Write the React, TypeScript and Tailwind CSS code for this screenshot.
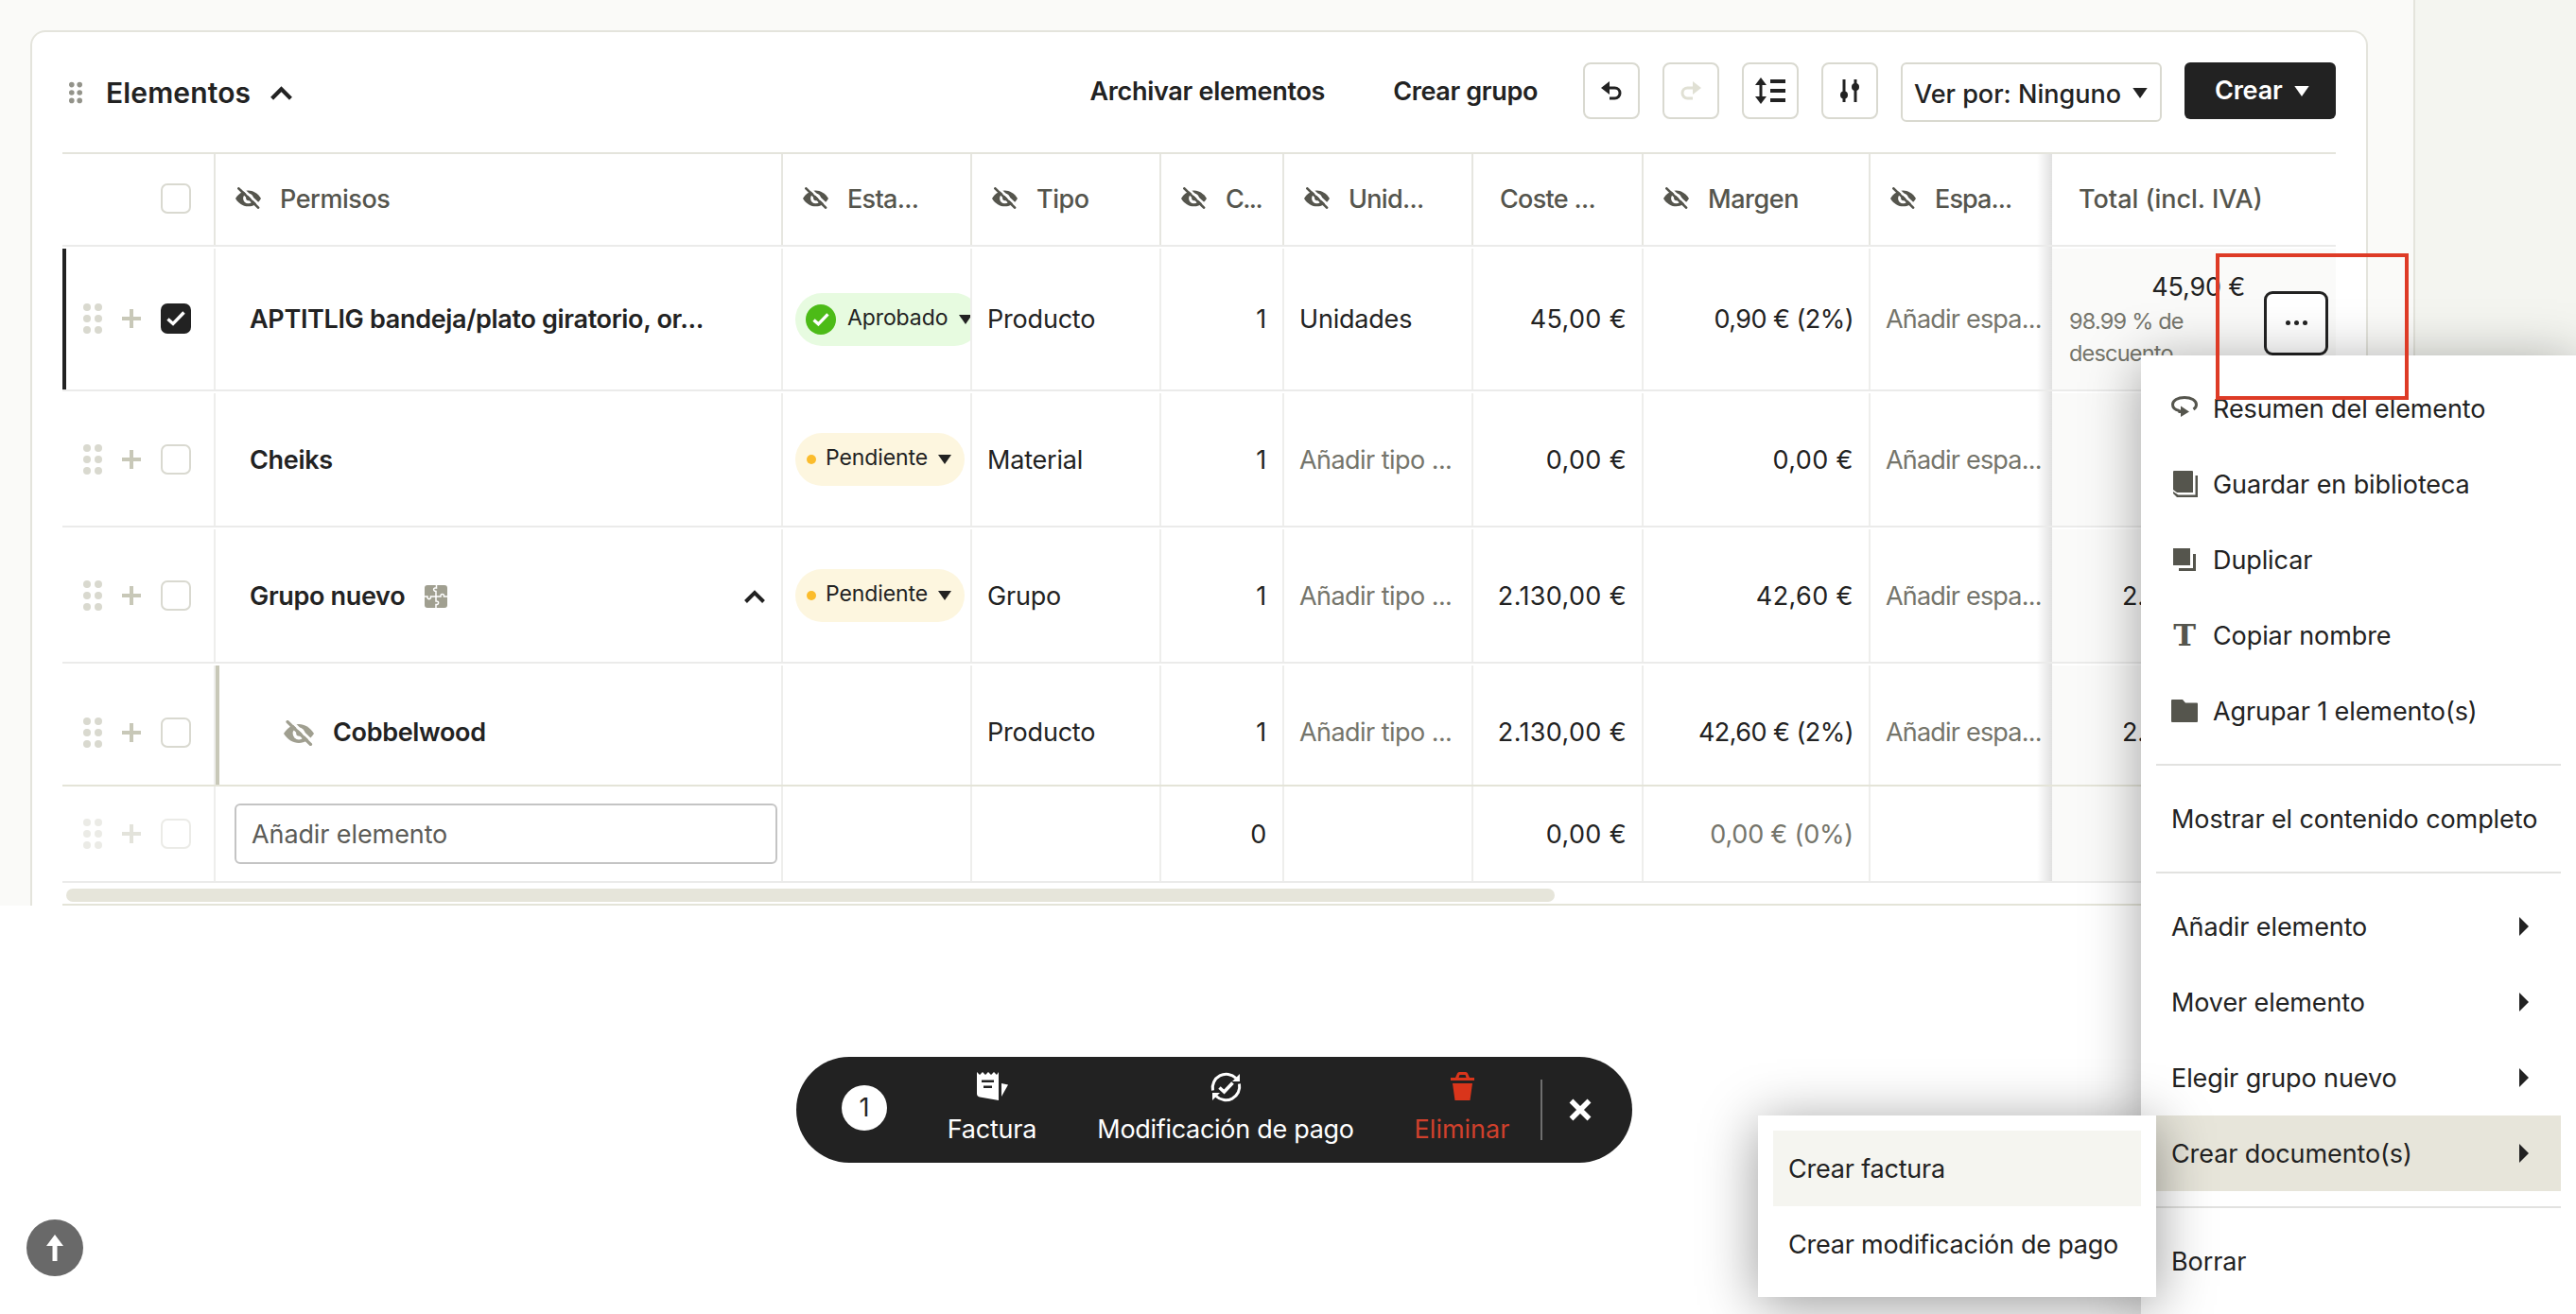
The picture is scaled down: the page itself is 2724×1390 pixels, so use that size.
import React from 'react';
import clsx from 'clsx';

type Row = {
  id: string;
  name: string;
  status?: 'approved' | 'pending';
  type: string;
  qty: string;
  unit: string;
  cost: string;
  margin: string;
  total: string;
  height: string;
  selected?: boolean;
  group?: boolean;
  child?: boolean;
};

const rows: Row[] = [
  { id: 'r1', name: 'APTITLIG bandeja/plato giratorio, or...', status: 'approved', type: 'Producto', qty: '1', unit: 'Unidades', cost: '45,00 €', margin: '0,90 € (2%)', total: '45,90 €', height: 'h-[153px]', selected: true },
  { id: 'r2', name: 'Cheiks', status: 'pending', type: 'Material', qty: '1', unit: '', cost: '0,00 €', margin: '0,00 €', total: '', height: 'h-[144px]' },
  { id: 'r3', name: 'Grupo nuevo', status: 'pending', type: 'Grupo', qty: '1', unit: '', cost: '2.130,00 €', margin: '42,60 €', total: '2.', height: 'h-[144px]', group: true },
  { id: 'r4', name: 'Cobbelwood', type: 'Producto', qty: '1', unit: '', cost: '2.130,00 €', margin: '42,60 € (2%)', total: '2.', height: 'h-[130px]', child: true },
];

const headers = [
  { label: 'Permisos', width: 'w-[600px]', hidden: true },
  { label: 'Esta...', width: 'w-[200px]', hidden: true },
  { label: 'Tipo', width: 'w-[200px]', hidden: true },
  { label: 'C...', width: 'w-[130px]', hidden: true },
  { label: 'Unid...', width: 'w-[200px]', hidden: true },
  { label: 'Coste ...', width: 'w-[180px]', hidden: false },
  { label: 'Margen', width: 'w-[240px]', hidden: true },
];

/* ---------- icons ---------- */

const EyeOff = ({ className }: { className: string }) => (
  <svg viewBox="0 0 32 27" className={className}>
    <path d="M0 14C4 7.500 10 4 16 4s12 3.500 16 10c-4 6.500-10 10-16 10S4 20.500 0 14z" fill="currentColor" />
    <circle cx="16" cy="14" r="6.400" fill="#fff" />
    <circle cx="16.500" cy="13.500" r="3.300" fill="currentColor" />
    <path d="M6 -1L32 24" stroke="#fff" strokeWidth="3" />
    <path d="M4 1.500L28.500 25.500" stroke="currentColor" strokeWidth="3.200" strokeLinecap="round" />
  </svg>
);

const Grip = ({ className }: { className: string }) => (
  <svg viewBox="0 0 20 32" className={className} fill="currentColor">
    {[4, 16, 28].map((y) => (
      <g key={y}>
        <circle cx="4" cy={y} r="4" />
        <circle cx="16" cy={y} r="4" />
      </g>
    ))}
  </svg>
);

const Plus = () => (
  <svg viewBox="0 0 20 20" className="w-5 h-5 text-[#c8c8b8]">
    <path d="M10 0v20M0 10h20" stroke="currentColor" strokeWidth="4" />
  </svg>
);

const Caret = ({ className }: { className: string }) => (
  <svg viewBox="0 0 14 10" className={className} fill="currentColor">
    <path d="M0 0h14L7 10z" />
  </svg>
);

const ChevronUp = ({ className }: { className: string }) => (
  <svg viewBox="0 0 22 14" className={className} fill="none" stroke="currentColor" strokeWidth="4">
    <path d="M1.500 12.500L11 3l9.500 9.500" />
  </svg>
);

const Puzzle = () => (
  <svg viewBox="0 0 24 24" className="w-6 h-6 ml-[21px]">
    <rect width="24" height="24" rx="3" fill="#a09f90" />
    <path
      d="M12.500 0v3c-3.500-.8-4 3.500-.5 3.500V17c3.500-.5 3.500 4 0 3.500V24M0 12h3c-.5 3.500 4 3.500 3.500 0H17c-.5-3.500 4-3.500 3.500 0H24"
      fill="none"
      stroke="#fff"
      strokeWidth="1.500"
    />
  </svg>
);

const Undo = ({ className }: { className: string }) => (
  <svg viewBox="0 0 22 20" className={className}>
    <path d="M0 7L9 0v14z" fill="currentColor" />
    <path d="M7 7h7.500a5.500 5.500 0 0 1 0 11H9" fill="none" stroke="currentColor" strokeWidth="3" />
  </svg>
);

const LineHeight = () => (
  <svg viewBox="0 0 32 28" className="w-8 h-7" fill="currentColor">
    <path d="M6 0l6 8H7.500v12H12l-6 8-6-8h4.500V8H0z" />
    <path d="M16 2h16v4H16zM16 12h16v4H16zM16 22h16v4H16z" />
  </svg>
);

const Sliders = () => (
  <svg viewBox="0 0 20 24" className="w-5 h-6" fill="currentColor">
    <path d="M2.500 0h3v24h-3zM14.500 0h3v24h-3z" />
    <circle cx="4" cy="16.500" r="4" />
    <circle cx="16" cy="8" r="4" />
  </svg>
);

const menuIcons: Record<string, React.ReactNode> = {
  summary: (
    <svg viewBox="0 0 28 24" className="w-7 h-6 -mt-1" fill="none">
      <path d="M8.500 16.500C4 15.500 1.500 13 1.500 10 1.500 5.500 7 2.500 14 2.500S26.500 5.500 26.500 10c0 2-1 3.700-3 5" stroke="currentColor" strokeWidth="3" />
      <path d="M10 11.500l9 6-9 5.500v-4H7.500v-3.500H10z" fill="currentColor" />
    </svg>
  ),
  library: (
    <svg viewBox="0 0 28 28" className="w-7 h-7" fill="currentColor">
      <path d="M3 0h19a1 1 0 0 1 1 1v22H6L2 20V1a1 1 0 0 1 1-1z" />
      <path d="M25.500 5H28v23H6l-4-4v-2l5.500 3.500h18z" />
    </svg>
  ),
  duplicate: (
    <svg viewBox="0 0 28 28" className="w-7 h-7" fill="currentColor">
      <path d="M2 2h18v18H2z" />
      <path d="M23 8h3v18H8v-3h15z" />
    </svg>
  ),
  title: (
    <span className="w-7 text-center text-[32px] leading-[28px] font-bold [font-family:'DejaVu_Serif',serif]">T</span>
  ),
  folder: (
    <svg viewBox="0 0 28 24" className="w-7 h-6" fill="currentColor">
      <path d="M1 0h11l3 3.500h12a1 1 0 0 1 1 1V23a1 1 0 0 1-1 1H1a1 1 0 0 1-1-1V1a1 1 0 0 1 1-1z" />
    </svg>
  ),
};

/* ---------- table parts ---------- */

const Checkbox = ({ checked }: { checked?: boolean }) => (
  <div
    className={clsx(
      'w-8 h-8 rounded-[7px] flex items-center justify-center shrink-0',
      checked ? 'bg-[#222]' : 'bg-white border-2 border-[#d9d9d0]',
    )}
  >
    {checked && (
      <svg viewBox="0 0 20 16" className="w-5 h-4" fill="none" stroke="#fff" strokeWidth="3.400">
        <path d="M1.500 8.500l5.500 5L18.500 1.500" />
      </svg>
    )}
  </div>
);

const StatusPill = ({ status }: { status: 'approved' | 'pending' }) =>
  status === 'approved' ? (
    <div className="flex items-center h-14 w-[196px] shrink-0 rounded-full bg-[#e7fbe0] pl-[11px]">
      <div className="w-8 h-8 rounded-full bg-[#4cbb17] flex items-center justify-center">
        <svg viewBox="0 0 20 16" className="w-[18px] h-[14px]" fill="none" stroke="#fff" strokeWidth="3.800">
          <path d="M1.500 8.500l5.500 5L18.500 1.500" />
        </svg>
      </div>
      <span className="text-[23px] ml-[12px] w-[118px] pb-[3px] whitespace-nowrap tracking-[-0.1px]">Aprobado</span>
      <Caret className="w-[14px] h-[10px]" />
    </div>
  ) : (
    <div className="flex items-center h-14 w-[179px] shrink-0 rounded-full bg-[#fdf6df] pl-[12px]">
      <div className="w-[10px] h-[10px] rounded-full bg-[#fbbc2c]" />
      <span className="text-[23px] ml-[10px] w-[119px] pb-[3px] whitespace-nowrap tracking-[-0.1px]">Pendiente</span>
      <Caret className="w-[14px] h-[10px]" />
    </div>
  );

const Cell = ({ className, children }: { className: string; children?: React.ReactNode }) => (
  <div className={clsx('flex items-center shrink-0 mt-[2px] border-r-2 border-[#eeeeec] overflow-hidden whitespace-nowrap', className)}>
    {children}
  </div>
);

const RowTools = ({ checked }: { checked?: boolean }) => (
  <>
    <Grip className="w-5 h-8 text-[#d9d9cf]" />
    <span className="ml-[21px] mr-[21px]"><Plus /></span>
    <Checkbox checked={checked} />
  </>
);

const StickyShadow = () => (
  <div className="w-4 -ml-4 shrink-0 bg-linear-to-r from-black/0 to-black/12" />
);

const TableRow = ({ row }: { row: Row }) => {
  // child rows hang slightly lower than their own centre
  const pad = row.child ? 'pt-[17px]' : 'pt-[2px]';

  return (
    <div className={clsx('flex border-b-2', row.height, row.child ? 'border-[#e4e4d8]' : 'border-[#ebebea]')}>
      <Cell
        className={clsx(
          'w-[162px] border-l-4 pl-[18px]',
          row.selected ? 'border-l-[#222] pb-[2px]' : 'border-l-transparent',
          row.child && 'pt-[15px]',
        )}
      >
        <RowTools checked={row.selected} />
      </Cell>
      <Cell className={clsx('w-[600px]', pad, row.child ? 'border-l-4 border-l-[#c8c8b8] pl-[68px]' : 'pl-[36px]')}>
        {row.child && <EyeOff className="w-8 h-[27px] text-[#a09f90] mr-[20px]" />}
        <span className="font-semibold tracking-[-0.33px]">{row.name}</span>
        {row.group && (
          <>
            <Puzzle />
            <ChevronUp className="w-[22px] h-[14px] ml-auto mr-[17px]" />
          </>
        )}
      </Cell>
      <Cell className="w-[200px] pl-[13px]">{row.status && <StatusPill status={row.status} />}</Cell>
      <Cell className={clsx('w-[200px] pl-[16px]', pad)}>{row.type}</Cell>
      <Cell className={clsx('w-[130px] justify-end pr-[17px]', pad)}>{row.qty}</Cell>
      <Cell className={clsx('w-[200px] pl-[16px]', pad)}>
        {row.unit || <span className="text-[#75756b] tracking-[-0.55px]">Añadir tipo ...</span>}
      </Cell>
      <Cell className={clsx('w-[180px] justify-end pr-[16px] tracking-[0.35px]', pad)}>{row.cost}</Cell>
      <Cell
        className={clsx(
          'w-[240px] justify-end pr-[16px]',
          row.margin.includes('(') ? 'tracking-[-0.55px]' : 'tracking-[0.4px]',
          pad,
        )}
      >
        {row.margin}
      </Cell>
      <div className={clsx('flex items-center w-[192px] shrink-0 pl-[16px] mt-[2px] whitespace-nowrap text-[#75756b] tracking-[-0.8px]', pad)}>
        Añadir espa...
      </div>
      <StickyShadow />
      <div className="w-[300px] mt-[2px] bg-[#fafaf9] flex items-center shrink-0">
        {row.selected ? (
          <>
            <div className="w-[204px] h-full pt-[23px]">
              <div className="text-right leading-9">{row.total}</div>
              <div className="pl-[18px] pt-px w-[170px] text-[23.500px] leading-[34px] tracking-[-0.8px] text-[#75756b]">
                98.99 % de descuento
              </div>
            </div>
            <div className="ml-[20px] mt-[8px] w-[68px] h-[68px] rounded-[9px] border-[3px] border-[#222] bg-white flex items-center justify-center gap-[4px]">
              <i className="w-[5px] h-[5px] rounded-full bg-[#222]" />
              <i className="w-[5px] h-[5px] rounded-full bg-[#222]" />
              <i className="w-[5px] h-[5px] rounded-full bg-[#222]" />
            </div>
          </>
        ) : (
          <span className={clsx('pl-[74px]', pad)}>{row.total}</span>
        )}
      </div>
    </div>
  );
};

const ToolButton = ({ children }: { children: React.ReactNode }) => (
  <button className="w-[60px] h-[60px] rounded-[8px] border-2 border-[#d9d9d0] bg-white flex items-center justify-center">
    {children}
  </button>
);

/* ---------- context menu ---------- */

const MenuItem = ({ label, icon, arrow, active }: { label: string; icon?: string; arrow?: boolean; active?: boolean }) => (
  <div className={clsx('flex items-center h-20 pl-4 pr-[34px] whitespace-nowrap', active && 'bg-[#e7e5da]')}>
    {icon && <span className="w-7 mr-4 flex justify-center text-[#55554d]">{menuIcons[icon]}</span>}
    <span className="pt-[2px] tracking-[-0.1px]">{label}</span>
    {arrow && (
      <svg viewBox="0 0 10 20" className="w-[10px] h-5 ml-auto" fill="currentColor">
        <path d="M0 0l10 10L0 20z" />
      </svg>
    )}
  </div>
);

const Divider = () => <div className="h-[2px] bg-[#e2e2e0] my-4" />;

const ContextMenu = () => (
  <div className="absolute left-[2264px] top-[376px] w-[460px] p-4 bg-white shadow-[0_8px_56px_rgba(0,0,0,0.36)]">
    <MenuItem icon="summary" label="Resumen del elemento" />
    <MenuItem icon="library" label="Guardar en biblioteca" />
    <MenuItem icon="duplicate" label="Duplicar" />
    <MenuItem icon="title" label="Copiar nombre" />
    <MenuItem icon="folder" label="Agrupar 1 elemento(s)" />
    <Divider />
    <MenuItem label="Mostrar el contenido completo" />
    <Divider />
    <MenuItem label="Añadir elemento" arrow />
    <MenuItem label="Mover elemento" arrow />
    <MenuItem label="Elegir grupo nuevo" arrow />
    <MenuItem label="Crear documento(s)" arrow active />
    <Divider />
    <MenuItem label="Borrar" />
  </div>
);

const SubMenu = () => (
  <div className="absolute left-[1859px] top-[1180px] w-[421px] p-4 bg-white shadow-[0_8px_56px_rgba(0,0,0,0.4)]">
    <div className="h-20 flex items-center pl-4 pt-[2px] bg-[#f5f5f0]">Crear factura</div>
    <div className="h-20 flex items-center pl-4 pt-[2px] whitespace-nowrap tracking-[-0.23px]">Crear modificación de pago</div>
  </div>
);

/* ---------- floating selection bar ---------- */

const SelectionBar = () => (
  <div className="absolute left-[842px] top-[1118px] w-[884px] h-[112px] rounded-full bg-[#222] text-white flex items-center">
    <div className="ml-12 -mt-1 w-12 h-12 rounded-full bg-white text-[#222] flex items-center justify-center">1</div>
    <div className="ml-[51px] w-[120px] h-full pt-4 flex flex-col items-center">
      <svg viewBox="0 0 33 30" className="w-[33px] h-[30px]">
        <path d="M0 0l3 3 3-3 3 3 3-3 3 3 3-3 3 3 2-3v30L3 26.500C1 26 0 25 0 23z" fill="#fff" />
        <path d="M5 8.500h13v2.500H5zM7 14.500h9V17H7z" fill="#222" />
        <path d="M26 12l7 1.500L26 26z" fill="#fff" />
      </svg>
      <span className="mt-[13px] leading-9">Factura</span>
    </div>
    <div className="ml-[37px] w-[300px] h-full pt-4 flex flex-col items-center">
      <svg viewBox="0 0 33 32" className="w-[33px] h-8" fill="none" stroke="#fff" strokeWidth="3">
        <path d="M2.500 19.500A14.500 14.500 0 0 1 27 6.500M30.500 12.500A14.500 14.500 0 0 1 6 25.500" />
        <path d="M31 2v8h-8zM2 30v-8h8z" fill="#fff" stroke="none" />
        <path d="M9.500 16.500l5 4.500 9-9.500" strokeWidth="3.600" />
      </svg>
      <span className="mt-[11px] leading-9 tracking-[-0.3px]">Modificación de pago</span>
    </div>
    <div className="ml-[40px] w-[120px] h-full pt-4 flex flex-col items-center text-[#d9351b]">
      <svg viewBox="0 0 25 30" className="w-[25px] h-[30px]" fill="currentColor">
        <path d="M0 6h5l2-4.500A2.500 2.500 0 0 1 9 0h7a2.500 2.500 0 0 1 2 1.500L20 6h5v3H0zM8.500 6h8l-1-3h-6z" fillRule="evenodd" />
        <path d="M2 12h21l-2.500 18h-16z" />
      </svg>
      <span className="mt-[13px] leading-9 tracking-[0px] text-[#d0402c]">Eliminar</span>
    </div>
    <div className="ml-[23px] w-[2px] h-16 bg-[#6f6f6f]" />
    <svg viewBox="0 0 24 24" className="w-6 h-6 ml-[28px]" stroke="#fff" strokeWidth="5.500">
      <path d="M2.500 2.500l19 19M21.500 2.500l-19 19" />
    </svg>
  </div>
);

export default function App() {
  return (
    <div className="relative w-[2724px] h-[1390px] overflow-hidden bg-white text-[#222] text-[27px] tracking-[-0.2px] [font-family:Inter,'Liberation_Sans',sans-serif]">
      <div className="flex h-[958px] bg-[#f4f5f0]">
        <div className="w-[2554px] border-r-2 border-[#e4e4dc] bg-[#fafaf8] pt-8 pl-8">
          <div className="w-[2472px] h-[926px] bg-white border-2 border-b-0 border-[#e4e4dc] rounded-t-[16px] px-8">
            {/* Section header */}
            <div className="flex items-start h-[127px] pt-8">
              <div className="flex items-center h-16 pl-[7px]">
                <Grip className="w-[14px] h-6 text-[#93938a]" />
                <h2 className="ml-[25px] text-[30px] font-semibold tracking-[0.15px]">Elementos</h2>
                <ChevronUp className="ml-[21px] w-[23px] h-[15px]" />
              </div>
              <div className="flex items-start ml-auto gap-6">
                <button className="h-[62px] mr-[48px] pt-px font-semibold tracking-[-0.3px]">Archivar elementos</button>
                <button className="h-[62px] mr-[24px] pt-px font-semibold tracking-[-0.35px]">Crear grupo</button>
                <ToolButton><Undo className="w-[22px] h-5" /></ToolButton>
                <ToolButton><Undo className="w-[22px] h-5 -scale-x-100 text-[#e0e0d4]" /></ToolButton>
                <ToolButton><LineHeight /></ToolButton>
                <ToolButton><Sliders /></ToolButton>
                <button className="w-[276px] h-[63px] pt-[5px] rounded-[6px] border-2 border-[#d9d9d0] flex items-center pl-3 font-medium whitespace-nowrap tracking-[0px]">
                  Ver por: Ninguno
                  <Caret className="w-4 h-[11px] ml-[12px] -mt-1" />
                </button>
                <button className="w-[160px] h-[60px] pt-px rounded-[6px] bg-[#222] text-white flex items-center pl-8 font-semibold">
                  Crear
                  <Caret className="w-4 h-[11px] ml-[13px] -mt-px" />
                </button>
              </div>
            </div>

            {/* Table */}
            <div className="w-[2404px] border-t-2 border-[#e4e4dc]">
              <div className="flex h-[98px] border-b-2 border-[#ebebea] text-[#55554d] font-medium tracking-[-0.45px] whitespace-nowrap">
                <div className="w-[162px] border-r-2 border-[#e6e6e0] flex items-center pl-[104px] pb-[2px] shrink-0"><Checkbox /></div>
                {headers.map((h) => (
                  <div key={h.label} className={clsx('flex items-center shrink-0 border-r-2 border-[#e6e6e0]', h.width, h.hidden ? 'pl-[21px]' : 'pl-[28px]')}>
                    {h.hidden && <EyeOff className="w-[27px] h-[23px] mr-[20px] mb-1" />}
                    <span className={h.label === 'C...' ? 'tracking-[-1.600px]' : h.label.endsWith('...') ? 'tracking-[-0.700px]' : ''}>{h.label}</span>
                  </div>
                ))}
                <div className="flex items-center w-[192px] shrink-0 pl-[21px]">
                  <EyeOff className="w-[27px] h-[23px] mr-[20px] mb-1" />
                  <span className="tracking-[-0.9px]">Espa...</span>
                </div>
                <StickyShadow />
                <div className="w-[300px] flex items-center pl-[28px] tracking-[0px]">Total (incl. IVA)</div>
              </div>

              {rows.map((row) => <TableRow key={row.id} row={row} />)}

              {/* New item row */}
              <div className="flex h-[102px] border-b-2 border-[#ebebea]">
                <div className="flex items-center w-[162px] pl-[22px] shrink-0 border-r-2 border-[#eeeeec]">
                  <div className="flex items-center opacity-50"><RowTools /></div>
                </div>
                <div className="w-[600px] shrink-0 border-r-2 border-[#eeeeec] flex items-center pl-5">
                  <div className="w-[574px] h-16 border-2 border-[#c4c4c4] rounded-[6px] flex items-center pl-4 pt-[2px] tracking-[-0.1px] text-[#5c5c58]">
                    Añadir elemento
                  </div>
                </div>
                <div className="w-[200px] shrink-0 border-r-2 border-[#eeeeec]" />
                <div className="w-[200px] shrink-0 border-r-2 border-[#eeeeec]" />
                <div className="w-[130px] shrink-0 border-r-2 border-[#eeeeec] flex items-center justify-end pr-[17px] pt-[2px]">0</div>
                <div className="w-[200px] shrink-0 border-r-2 border-[#eeeeec]" />
                <div className="w-[180px] shrink-0 border-r-2 border-[#eeeeec] flex items-center justify-end pr-[16px] pt-[2px] tracking-[0.35px]">0,00 €</div>
                <div className="w-[240px] shrink-0 border-r-2 border-[#eeeeec] flex items-center justify-end pr-[16px] pt-[2px] tracking-[-0.2px] text-[#75756b]">0,00 € (0%)</div>
                <div className="w-[192px] shrink-0" />
                <StickyShadow />
                <div className="w-[300px] bg-[#fafaf9]" />
              </div>

              {/* Horizontal scrollbar */}
              <div className="h-6 pt-[6px] pl-1 border-b-2 border-[#e4e4d8]">
                <div className="w-[1574px] h-[14px] rounded-full bg-[#e6e5da]" />
              </div>
            </div>
          </div>
        </div>
      </div>

      <ContextMenu />
      <SubMenu />
      <SelectionBar />

      <div className="absolute left-[2343px] top-[268px] w-[204px] h-[155px] border-4 border-[#de3b26]" />

      <div className="absolute left-7 top-[1290px] w-[60px] h-[60px] rounded-full bg-[#696969] flex items-center justify-center">
        <svg viewBox="0 0 18 28" className="w-[18px] h-7" fill="#fff">
          <path d="M9 0l9 12h-6.500v16h-5V12H0z" />
        </svg>
      </div>
    </div>
  );
}
